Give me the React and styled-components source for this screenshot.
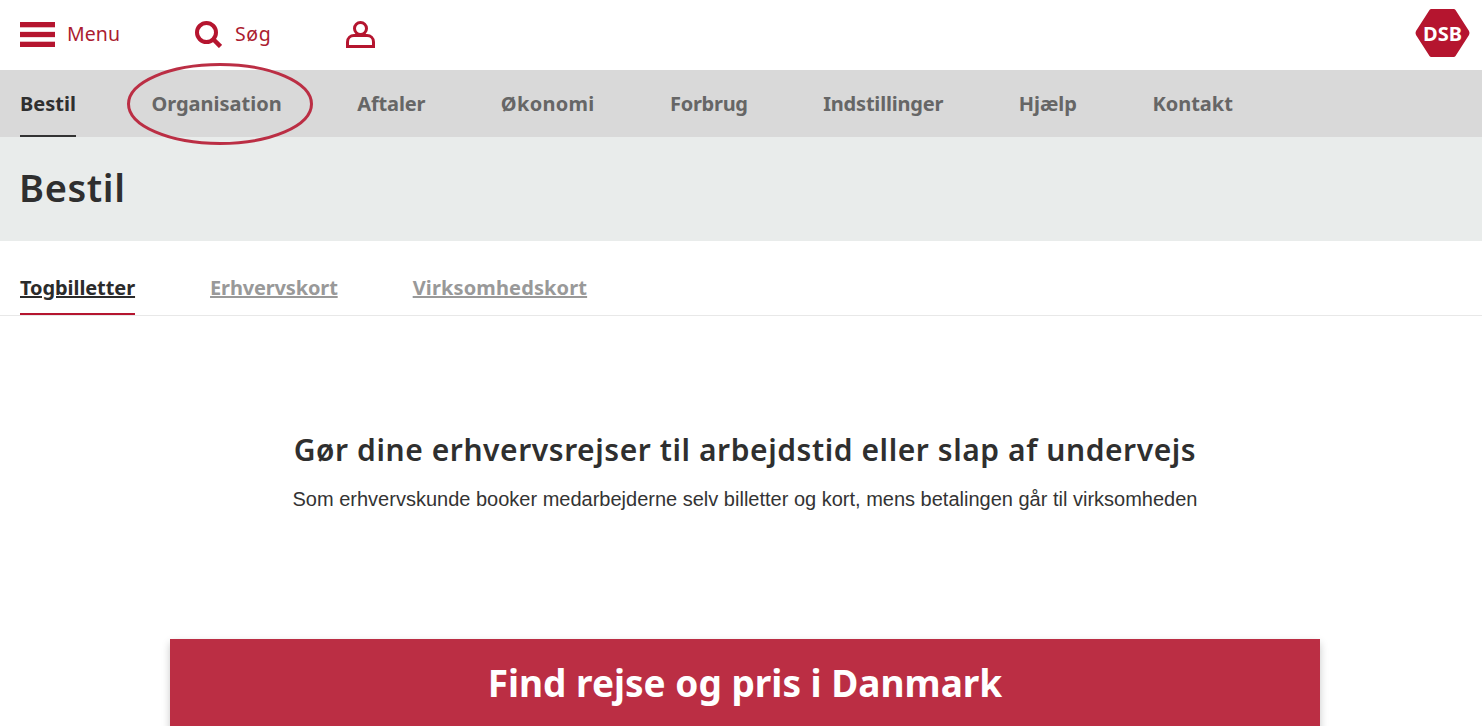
import React from 'react';
import styled, { createGlobalStyle } from 'styled-components';

const Global = createGlobalStyle`
  html, body {
    margin: 0;
    height: 100%;
    overflow: hidden;
    background: #fff;
  }
  body {
    font-family: "Noto Sans", "Liberation Sans", sans-serif;
    color: #2f2f2f;
  }
`;

const red = '#b5152f';

const TopBar = styled.header`
  display: flex;
  align-items: center;
  height: 70px;
  padding: 0 12px 4px 20px;
  box-sizing: border-box;
`;

const TopItem = styled.a`
  display: flex;
  align-items: center;
  gap: ${(p) => p.$gap}px;
  width: ${(p) => p.$width}px;
  color: #ab1c30;
  font-size: 19.5px;
  letter-spacing: ${(p) => p.$spacing || 0}px;
`;

const Icon = styled.svg`
  flex: none;
  margin-top: 3px;
`;

const Logo = styled.div`
  position: relative;
  margin-left: auto;
  width: 55px;
  height: 48px;
  display: flex;
  align-items: center;
  justify-content: center;
  color: #fff;
  font-size: 20px;
  font-weight: 700;
`;

const LogoShape = styled.svg`
  position: absolute;
  inset: 0;
`;

const LogoText = styled.span`
  position: relative;
`;

const Nav = styled.nav`
  position: relative;
  display: flex;
  gap: 75.5px;
  height: 67px;
  padding-left: 20px;
  background: #d9d9d9;
`;

const NavItem = styled.a`
  display: flex;
  align-items: center;
  box-sizing: border-box;
  height: 67px;
  padding-top: 2px;
  font-size: 20px;
  font-weight: 700;
  letter-spacing: ${(p) => p.$spacing || 0}px;
  color: ${(p) => (p.$active ? '#2f2f2f' : '#666')};
  border-bottom: 2px solid ${(p) => (p.$active ? '#333' : 'transparent')};
`;

const Ring = styled.svg`
  position: absolute;
  left: 126px;
  top: -7px;
  overflow: visible;
`;

const TitleBand = styled.div`
  display: flex;
  align-items: center;
  height: 104px;
  padding: 0 19px 5px;
  box-sizing: border-box;
  background: #e9eceb;
`;

const PageTitle = styled.h1`
  margin: 0;
  font-size: 38px;
  font-weight: 600;
  letter-spacing: 0.6px;
  color: #2f2f2f;
`;

const Tabs = styled.div`
  display: flex;
  align-items: flex-end;
  gap: 75px;
  height: 75px;
  padding-left: 20px;
  box-sizing: border-box;
  border-bottom: 1px solid #e8e8e8;
`;

const Tab = styled.a`
  display: block;
  height: 49px;
  padding-top: 8px;
  box-sizing: border-box;
  font-size: 20px;
  line-height: 28px;
  font-weight: 700;
  text-decoration: underline;
  letter-spacing: ${(p) => p.$spacing || 0}px;
  color: ${(p) => (p.$active ? '#2b2b2b' : '#999')};
  border-bottom: 2px solid ${(p) => (p.$active ? red : 'transparent')};
`;

const Main = styled.main`
  padding-left: 8px;
`;

const Intro = styled.section`
  display: flex;
  flex-direction: column;
  align-items: center;
  padding-top: 114px;
`;

const IntroTitle = styled.h2`
  margin: 0;
  font-size: 30px;
  line-height: 40px;
  font-weight: 600;
  color: #2f2f2f;
  letter-spacing: 0.57px;
`;

const IntroText = styled.p`
  margin: 17px 0 0;
  font-family: "Liberation Sans", Arial, sans-serif;
  font-size: 20px;
  line-height: 24px;
  color: #333;
`;

const Card = styled.div`
  display: flex;
  justify-content: center;
  width: 1150px;
  height: 120px;
  margin: 128px auto 0;
  padding-top: 17px;
  box-sizing: border-box;
  background: #bb2e44;
  box-shadow: 0 4px 8px rgba(0, 0, 0, 0.22);
`;

const CardTitle = styled.h3`
  margin: 0;
  color: #fff;
  font-size: 37px;
  line-height: 54px;
  font-weight: 700;
`;

const navItems = [
  ['Organisation', 0],
  ['Aftaler', -0.14],
  ['Økonomi', 0.28],
  ['Forbrug', -0.28],
  ['Indstillinger', -0.2],
  ['Hjælp', 0],
  ['Kontakt', 0],
];

export default function App() {
  return (
    <>
      <Global />
      <TopBar>
        <TopItem $gap={12} $width={175} $spacing={0.05}>
          <Icon width="35" height="25" viewBox="0 0 35 25" fill={red}>
            <rect y="0" width="35" height="5.3" />
            <rect y="9.85" width="35" height="5.3" />
            <rect y="19.7" width="35" height="5.3" />
          </Icon>
          Menu
        </TopItem>
        <TopItem $gap={13} $width={151} $spacing={0.6}>
          <Icon width="27" height="27" viewBox="0 0 27 27" fill="none" stroke={red}>
            <circle cx="11.5" cy="11.5" r="9.5" strokeWidth="4" />
            <path d="M18.5 18.5 L25.5 25.5" strokeWidth="4.5" />
          </Icon>
          Søg
        </TopItem>
        <TopItem $gap={0} $width={40}>
          <Icon width="29" height="27" viewBox="0 0 29 27" fill="none" stroke={red} strokeWidth="3">
            <circle cx="14.5" cy="7.5" r="6" />
            <path d="M1.5 25.5 V21 C1.5 17 4.5 14.5 8 14.5 H21 C24.5 14.5 27.5 17 27.5 21 V25.5 Z" />
          </Icon>
        </TopItem>
        <Logo>
          <LogoShape width="55" height="48" viewBox="0 0 55 48">
            <path d="M14.5 1 Q15 0 16.5 0 H38.5 Q40 0 40.5 1 L54 22 Q55 24 54 26 L40.5 47 Q40 48 38.5 48 H16.5 Q15 48 14.5 47 L1 26 Q0 24 1 22 Z" fill={red} />
          </LogoShape>
          <LogoText>DSB</LogoText>
        </Logo>
      </TopBar>
      <Nav>
        <NavItem $active>Bestil</NavItem>
        {navItems.map(([label, spacing]) => (
          <NavItem key={label} $spacing={spacing}>
            {label}
          </NavItem>
        ))}
        <Ring width="188" height="82" viewBox="0 0 188 82" fill="none">
          <ellipse cx="94" cy="41" rx="91.5" ry="39.5" stroke="#bb2e44" strokeWidth="3" />
        </Ring>
      </Nav>
      <TitleBand>
        <PageTitle>Bestil</PageTitle>
      </TitleBand>
      <Tabs>
        <Tab $active $spacing={-0.08}>Togbilletter</Tab>
        <Tab $spacing={-0.15}>Erhvervskort</Tab>
        <Tab $spacing={0.13}>Virksomhedskort</Tab>
      </Tabs>
      <Main>
        <Intro>
          <IntroTitle>Gør dine erhvervsrejser til arbejdstid eller slap af undervejs</IntroTitle>
          <IntroText>Som erhvervskunde booker medarbejderne selv billetter og kort, mens betalingen går til virksomheden</IntroText>
        </Intro>
        <Card>
          <CardTitle>Find rejse og pris i Danmark</CardTitle>
        </Card>
      </Main>
    </>
  );
}
